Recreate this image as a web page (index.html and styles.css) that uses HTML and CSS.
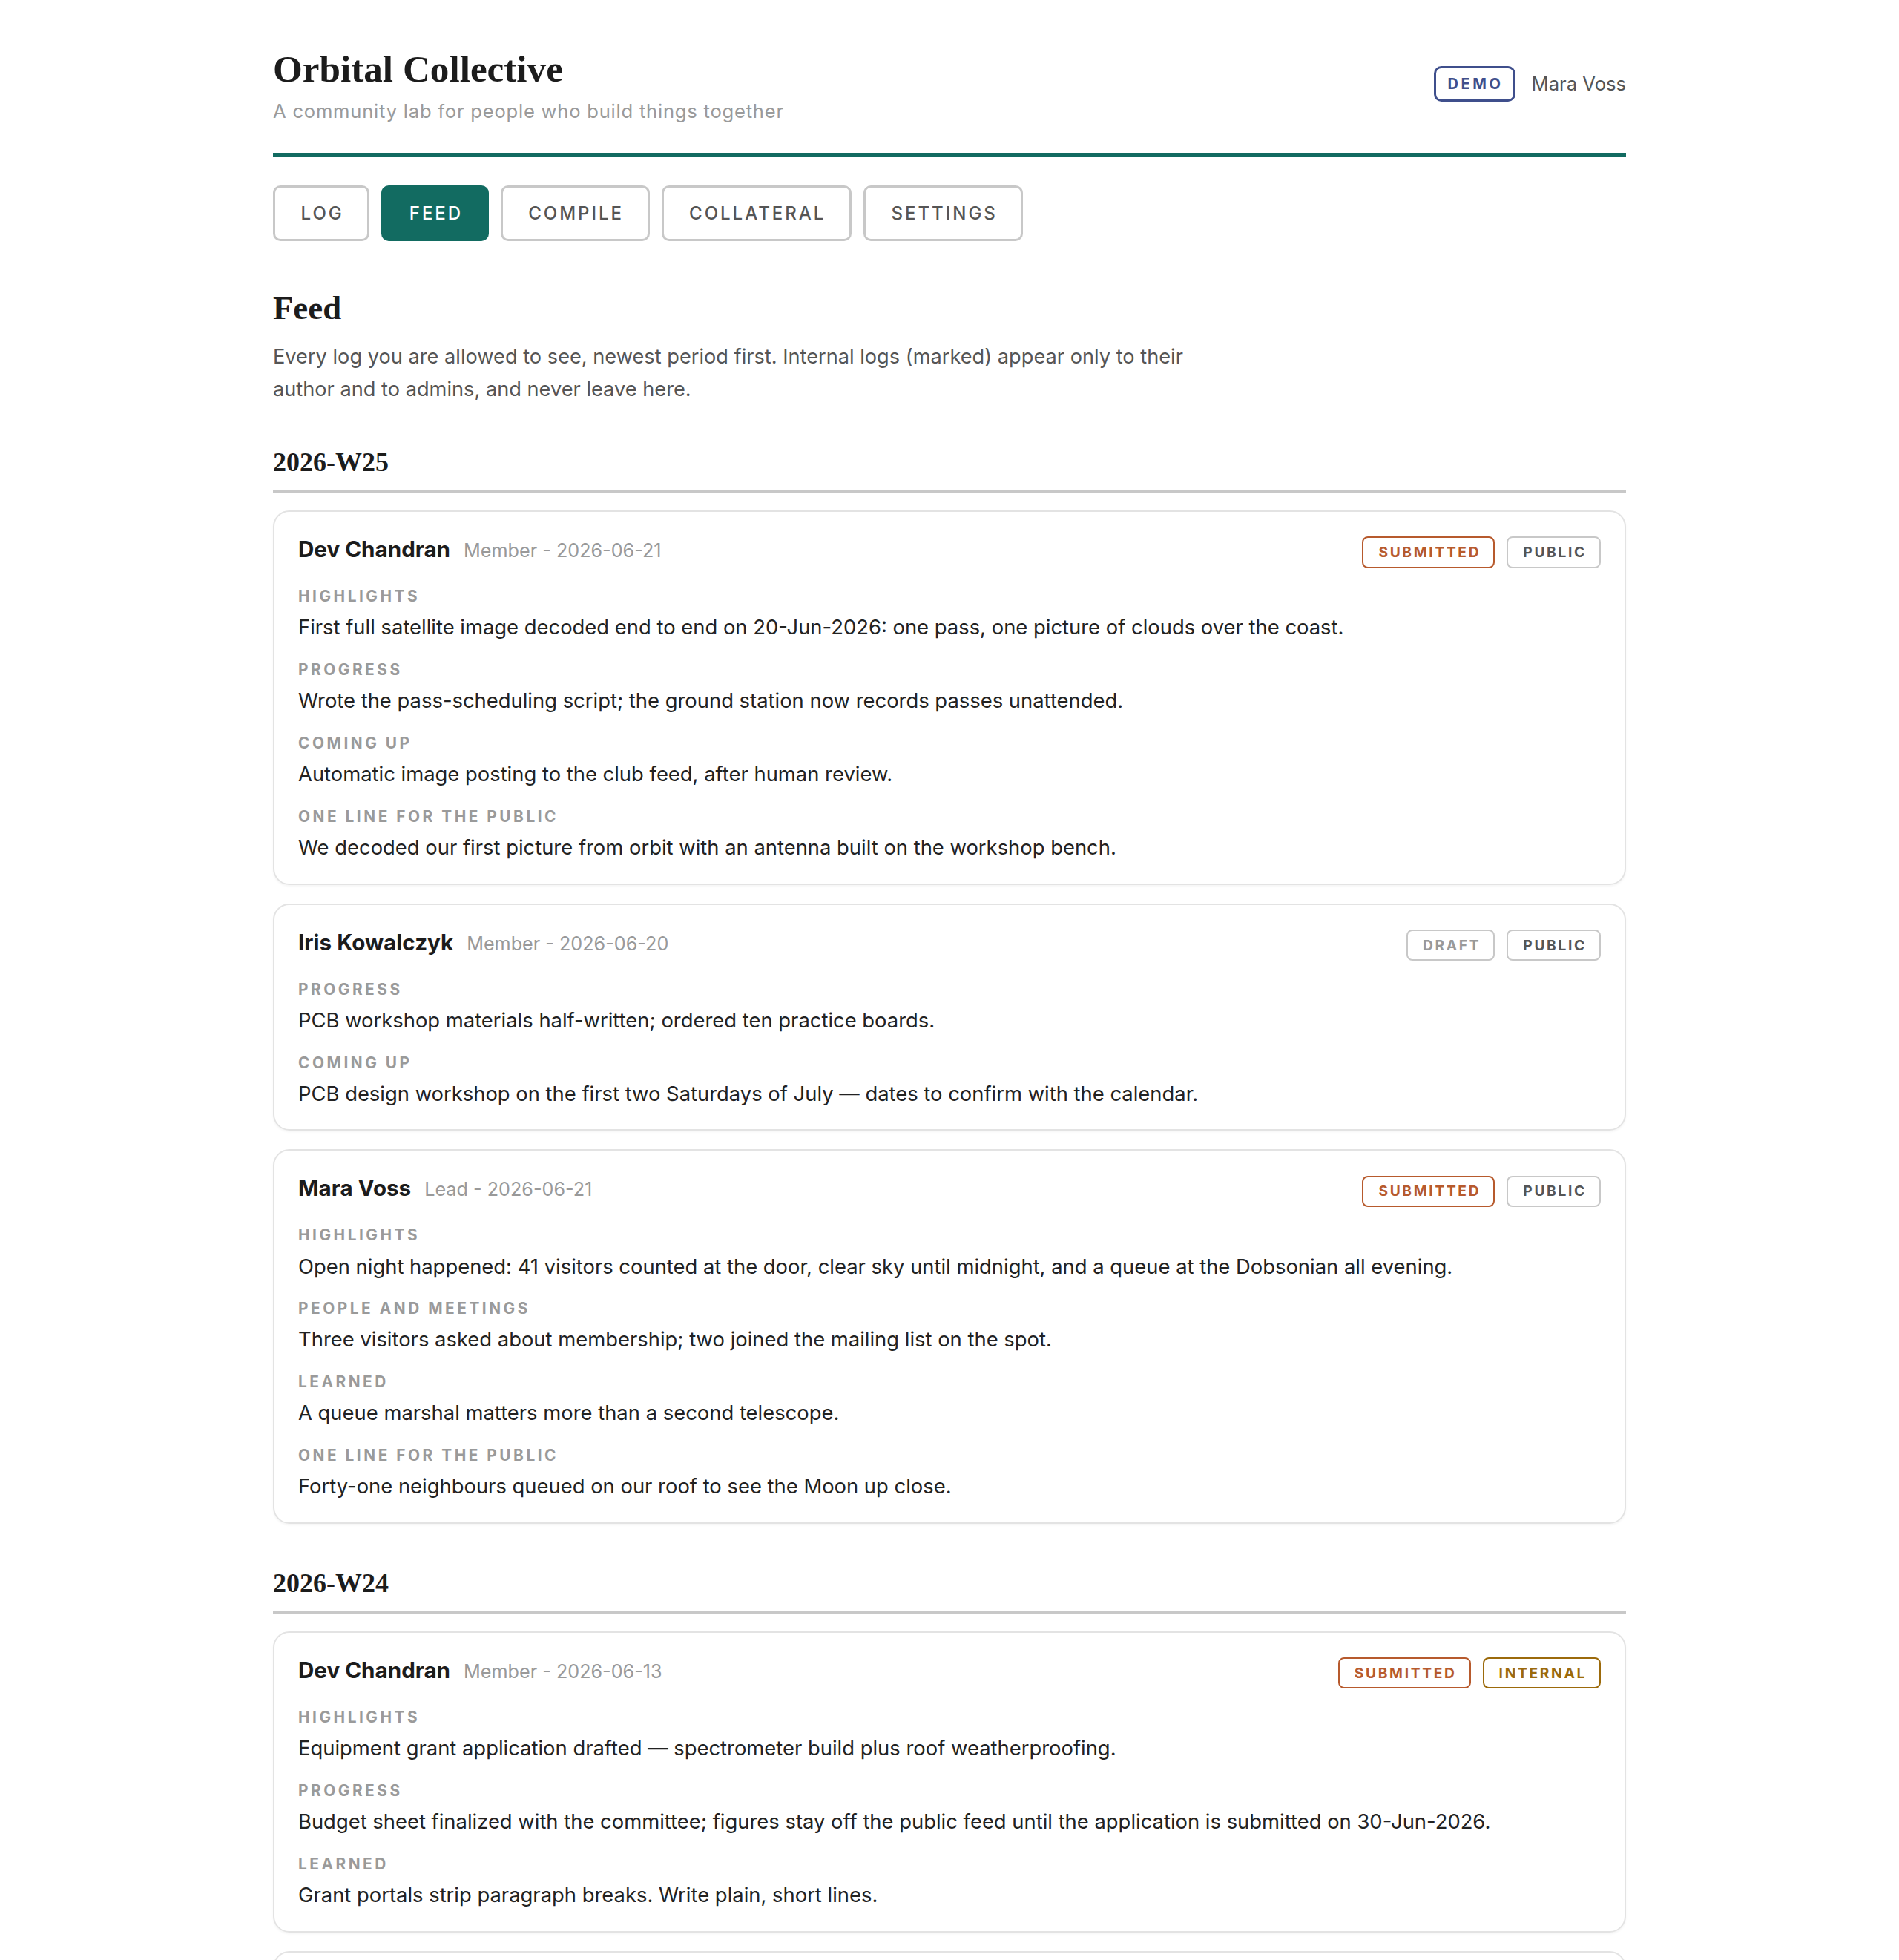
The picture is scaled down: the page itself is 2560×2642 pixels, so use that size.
FILE: index.html
```html
<!DOCTYPE html>
<html lang="en">
<head>
	<meta charset="UTF-8">
	<meta name="viewport" content="width=device-width, initial-scale=1.0">
	<title>Orbital Collective - Feed</title>
	<link rel="stylesheet" href="styles.css">
</head>
<body>
	<div class="page">
		<!-- Site header -->
		<header class="site-header">
			<div class="brand">
				<h1>Orbital Collective</h1>
				<p class="tagline">A community lab for people who build things together</p>
			</div>
			<div class="account">
				<span class="mode-badge">DEMO</span>
				<span class="account-name">Mara Voss</span>
			</div>
		</header>

		<!-- Tabs -->
		<nav class="tabs">
			<a href="#" class="tab">LOG</a>
			<a href="#" class="tab active">FEED</a>
			<a href="#" class="tab">COMPILE</a>
			<a href="#" class="tab">COLLATERAL</a>
			<a href="#" class="tab">SETTINGS</a>
		</nav>

		<main>
			<h2 class="page-title">Feed</h2>
			<p class="intro">Every log you are allowed to see, newest period first. Internal logs (marked) appear only to their author and to admins, and never leave here.</p>

			<!-- Week 25 -->
			<section class="period">
				<h3 class="period-title">2026-W25</h3>

				<article class="entry">
					<div class="entry-head">
						<div class="who">
							<span class="author">Dev Chandran</span>
							<span class="meta">Member - 2026-06-21</span>
						</div>
						<div class="tags">
							<span class="tag submitted">SUBMITTED</span>
							<span class="tag public">PUBLIC</span>
						</div>
					</div>
					<div class="field">
						<div class="field-label">HIGHLIGHTS</div>
						<p>First full satellite image decoded end to end on 20-Jun-2026: one pass, one picture of clouds over the coast.</p>
					</div>
					<div class="field">
						<div class="field-label">PROGRESS</div>
						<p>Wrote the pass-scheduling script; the ground station now records passes unattended.</p>
					</div>
					<div class="field">
						<div class="field-label">COMING UP</div>
						<p>Automatic image posting to the club feed, after human review.</p>
					</div>
					<div class="field">
						<div class="field-label">ONE LINE FOR THE PUBLIC</div>
						<p>We decoded our first picture from orbit with an antenna built on the workshop bench.</p>
					</div>
				</article>

				<article class="entry">
					<div class="entry-head">
						<div class="who">
							<span class="author">Iris Kowalczyk</span>
							<span class="meta">Member - 2026-06-20</span>
						</div>
						<div class="tags">
							<span class="tag draft">DRAFT</span>
							<span class="tag public">PUBLIC</span>
						</div>
					</div>
					<div class="field">
						<div class="field-label">PROGRESS</div>
						<p>PCB workshop materials half-written; ordered ten practice boards.</p>
					</div>
					<div class="field">
						<div class="field-label">COMING UP</div>
						<p>PCB design workshop on the first two Saturdays of July — dates to confirm with the calendar.</p>
					</div>
				</article>

				<article class="entry">
					<div class="entry-head">
						<div class="who">
							<span class="author">Mara Voss</span>
							<span class="meta">Lead - 2026-06-21</span>
						</div>
						<div class="tags">
							<span class="tag submitted">SUBMITTED</span>
							<span class="tag public">PUBLIC</span>
						</div>
					</div>
					<div class="field">
						<div class="field-label">HIGHLIGHTS</div>
						<p>Open night happened: 41 visitors counted at the door, clear sky until midnight, and a queue at the Dobsonian all evening.</p>
					</div>
					<div class="field">
						<div class="field-label">PEOPLE AND MEETINGS</div>
						<p>Three visitors asked about membership; two joined the mailing list on the spot.</p>
					</div>
					<div class="field">
						<div class="field-label">LEARNED</div>
						<p>A queue marshal matters more than a second telescope.</p>
					</div>
					<div class="field">
						<div class="field-label">ONE LINE FOR THE PUBLIC</div>
						<p>Forty-one neighbours queued on our roof to see the Moon up close.</p>
					</div>
				</article>
			</section>

			<!-- Week 24 -->
			<section class="period">
				<h3 class="period-title">2026-W24</h3>

				<article class="entry">
					<div class="entry-head">
						<div class="who">
							<span class="author">Dev Chandran</span>
							<span class="meta">Member - 2026-06-13</span>
						</div>
						<div class="tags">
							<span class="tag submitted">SUBMITTED</span>
							<span class="tag internal">INTERNAL</span>
						</div>
					</div>
					<div class="field">
						<div class="field-label">HIGHLIGHTS</div>
						<p>Equipment grant application drafted — spectrometer build plus roof weatherproofing.</p>
					</div>
					<div class="field">
						<div class="field-label">PROGRESS</div>
						<p>Budget sheet finalized with the committee; figures stay off the public feed until the application is submitted on 30-Jun-2026.</p>
					</div>
					<div class="field">
						<div class="field-label">LEARNED</div>
						<p>Grant portals strip paragraph breaks. Write plain, short lines.</p>
					</div>
				</article>

				<article class="entry">
					<div class="entry-head">
						<div class="who">
							<span class="author">Iris Kowalczyk</span>
							<span class="meta">Member - 2026-06-12</span>
						</div>
						<div class="tags">
							<span class="tag submitted">SUBMITTED</span>
							<span class="tag public">PUBLIC</span>
						</div>
					</div>
					<div class="field">
						<div class="field-label">PROGRESS</div>
						<p>Soldering station rota drafted for the summer term.</p>
					</div>
				</article>
			</section>
		</main>
	</div>
</body>
</html>
```

FILE: styles.css
```css
* {
	margin: 0;
	padding: 0;
	box-sizing: border-box;
}

/* Base */
body {
	font-family: 'Inter', 'Noto Sans', sans-serif;
	font-size: 27.4px;
	color: #222;
	background: #FFF;
}

.page {
	width: 1824px;
	margin: 0 auto;
	padding: 62px 0 80px;
}

/* Header */
.site-header {
	display: flex;
	align-items: center;
	justify-content: space-between;
	padding-bottom: 36px;
	border-bottom: 6.4px solid #126B61;
}

.brand h1 {
	font-family: 'Liberation Serif', 'Times New Roman', serif;
	font-size: 51.2px;
	font-weight: 700;
	line-height: 1.2;
	color: #1C1C1C;
}

.tagline {
	margin-top: 8px;
	font-size: 25.6px;
	line-height: 1.5;
	letter-spacing: 0.03em;
	color: #9A9A9A;
}

.account {
	display: flex;
	align-items: center;
	gap: 22px;
	margin-bottom: 6px;
}

.mode-badge {
	font-size: 20px;
	font-weight: 700;
	letter-spacing: 0.18em;
	color: #3F4F8C;
	border: 3px solid #3F4F8C;
	border-radius: 10px;
	padding: 7px 13px 7px 16px;
	line-height: 1.4;
}

.account-name {
	font-size: 25.6px;
	color: #555;
}

/* Tabs */
.tabs {
	display: flex;
	gap: 16px;
	margin-top: 38px;
}

.tab {
	display: block;
	font-size: 24px;
	font-weight: 500;
	letter-spacing: 0.125em;
	line-height: 1.5;
	padding: 16.8px 31.5px 16.8px 34.5px;
	color: #555;
	text-decoration: none;
	border: 3.2px solid #C8C8C8;
	border-radius: 10px;
}

.tab.active {
	background-color: #126B61;
	border-color: #126B61;
	color: #FFF;
}

/* Page intro */
.page-title {
	margin-top: 64px;
	font-family: 'Liberation Serif', 'Times New Roman', serif;
	font-size: 44.8px;
	font-weight: 700;
	line-height: 1.2;
	color: #1C1C1C;
}

.intro {
	margin-top: 16px;
	max-width: 1248px;
	font-size: 27.2px;
	line-height: 1.6;
	color: #555;
}

/* Period sections */
.period {
	margin-top: 54px;
}

.period + .period {
	margin-top: 57px;
}

.period-title {
	font-family: 'Liberation Serif', 'Times New Roman', serif;
	font-size: 36px;
	font-weight: 700;
	line-height: 1.3;
	color: #1C1C1C;
	padding-bottom: 13px;
	border-bottom: 4px solid #C8C8C8;
	margin-bottom: 24px;
}

/* Log entries */
.entry {
	border: 2px solid #E3E3E3;
	border-radius: 22px;
	padding: 32px 32px 28px;
	margin-bottom: 25px;
	box-shadow: 0 2px 3px rgba(0, 0, 0, 0.04);
}

.entry-head {
	display: flex;
	align-items: center;
	justify-content: space-between;
	margin-bottom: 4px;
}

.who {
	display: flex;
	align-items: baseline;
	gap: 18px;
	margin-bottom: 9px;
}

.author {
	font-size: 29.6px;
	font-weight: 700;
	color: #1C1C1C;
}

.meta {
	font-size: 25.2px;
	color: #999;
}

.tags {
	display: flex;
	gap: 16px;
}

.tag {
	font-size: 19.2px;
	font-weight: 700;
	letter-spacing: 0.14em;
	line-height: 1.2;
	padding: 7.5px 17px 7.5px 20px;
	border: 2.5px solid #C8C8C8;
	border-radius: 8px;
}

.tag.submitted {
	color: #B75A2D;
	border-color: #B75A2D;
}

.tag.public {
	color: #555;
}

.tag.draft {
	color: #999;
}

.tag.internal {
	color: #9C6A0B;
	border-color: #9C6A0B;
}

.field {
	margin-top: 22px;
}

.field-label {
	font-size: 20.8px;
	font-weight: 700;
	letter-spacing: 0.17em;
	line-height: 1.4;
	color: #9A9A9A;
	margin-bottom: 7px;
}

.field p {
	line-height: 40.8px;
	color: #222;
}
```
